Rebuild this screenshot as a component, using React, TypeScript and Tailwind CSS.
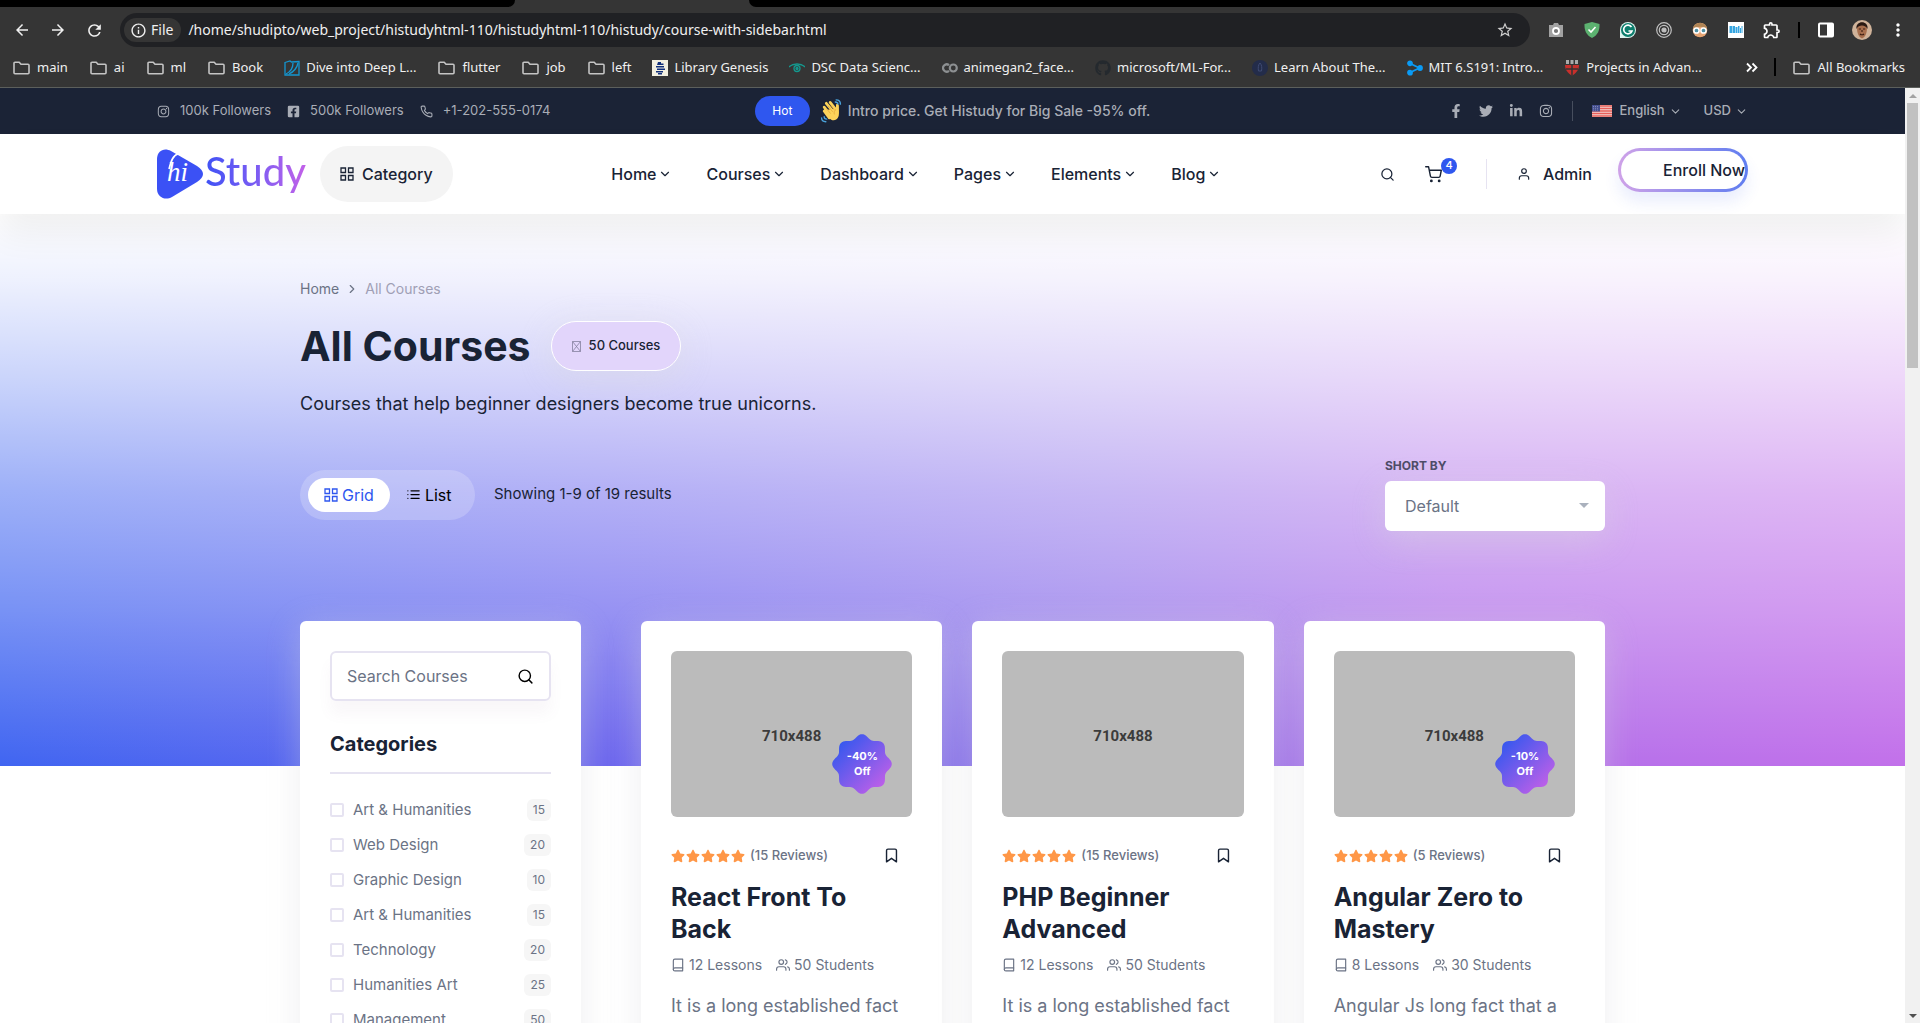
import React from "react";
import { FiBook, FiBookmark, FiChevronDown, FiChevronRight, FiList, FiPhone, FiSearch, FiShoppingCart, FiUser, FiUsers } from "react-icons/fi";
import { FaFacebookF, FaFacebookSquare, FaGithub, FaInstagram, FaLinkedinIn, FaStar, FaTwitter } from "react-icons/fa";
import { MdArrowBack, MdArrowForward, MdInfoOutline, MdMoreVert, MdOutlineExtension, MdRefresh, MdStarBorder } from "react-icons/md";

/* ---------- Browser chrome ---------- */

function FolderIcon() {
  return (
    <svg viewBox="0 0 17 16" className="mx-px h-4 w-[17px]" fill="none" stroke="#c4c4c4" strokeWidth="1.6" strokeLinejoin="round">
      <path d="M1 3.2a1 1 0 0 1 1-1h4.2l1.8 2h7a1 1 0 0 1 1 1v7.6a1 1 0 0 1-1 1H2a1 1 0 0 1-1-1z" />
    </svg>
  );
}

function DiveIcon() {
  return (
    <svg viewBox="0 0 16 16" className="size-4" fill="none" stroke="#1496d0" strokeWidth="1.3">
      <path d="M1 2.5 6 1l1.500 1L15 1.500v13.500H1z" />
      <path d="M9 3C9 8 6 12 2 14M14 3c-1 5-5 9-9 11" />
    </svg>
  );
}

function LibIcon() {
  return (
    <svg viewBox="0 0 16 16" className="size-4">
      <rect width="16" height="16" fill="#f3f0e0" />
      <path d="M6 2h3v1.500h2.500V5H5zM4 6h8v1.500H4zM5 8.500h8V10H5zM4 11h7v1.500H4zM6 13h4v1.500H6z" fill="#12307a" />
    </svg>
  );
}

function EyeIcon() {
  return (
    <svg viewBox="0 0 16 16" className="size-4" fill="none" stroke="#14998f" strokeWidth="1.3">
      <path d="M0 7C4 3 12 3 16 7" />
      <circle cx="8" cy="8.500" r="3" />
      <circle cx="8" cy="8.500" r="1" fill="#14998f" />
    </svg>
  );
}

function ColabIcon() {
  return (
    <svg viewBox="0 0 16 16" className="size-4" fill="none" stroke="#8d9092" strokeWidth="2.200">
      <path d="M7 5.200a3.600 3.600 0 1 0 0 5.600" />
      <circle cx="11.300" cy="8" r="3.500" />
    </svg>
  );
}

function RocketIcon() {
  return (
    <svg viewBox="0 0 16 16" className="size-4">
      <circle cx="8" cy="8" r="8" fill="#232c4a" />
      <path d="M8 3c2 2 2 5 1.500 8h-3C6 8 6 5 8 3z" fill="none" stroke="#3f4a72" />
    </svg>
  );
}

function NodesIcon() {
  return (
    <svg viewBox="0 0 16 16" className="size-4" fill="#0a9bf5" stroke="#0a9bf5" strokeWidth="1.800">
      <path d="M3 3.500 12.500 8 3 12.500" fill="none" />
      <circle cx="3" cy="3.300" r="2" />
      <circle cx="3" cy="12.700" r="2" />
      <circle cx="13" cy="8" r="2" />
    </svg>
  );
}

function ShieldsIcon() {
  return (
    <svg viewBox="0 0 16 16" className="size-4">
      <path d="M2 0h3v4H2zM6.500 0h3v4h-3zM11 0h3v4h-3z" fill="#aaa" />
      <path d="M1 5h14c0 5-3 8-7 11C4 13 1 10 1 5z" fill="#c9302c" />
      <path d="M8 5v11M2 9h12" stroke="#353535" strokeWidth="1.500" />
    </svg>
  );
}

const bookmarks: { label: string; icon: React.ReactNode }[] = [
  { label: "main", icon: <FolderIcon /> },
  { label: "ai", icon: <FolderIcon /> },
  { label: "ml", icon: <FolderIcon /> },
  { label: "Book", icon: <FolderIcon /> },
  { label: "Dive into Deep L...", icon: <DiveIcon /> },
  { label: "flutter", icon: <FolderIcon /> },
  { label: "job", icon: <FolderIcon /> },
  { label: "left", icon: <FolderIcon /> },
  { label: "Library Genesis", icon: <LibIcon /> },
  { label: "DSC Data Scienc...", icon: <EyeIcon /> },
  { label: "animegan2_face...", icon: <ColabIcon /> },
  { label: "microsoft/ML-For...", icon: <FaGithub className="size-4 text-[#24292e]" /> },
  { label: "Learn About The...", icon: <RocketIcon /> },
  { label: "MIT 6.S191: Intro...", icon: <NodesIcon /> },
  { label: "Projects in Advan...", icon: <ShieldsIcon /> },
];

function ToolButton({ label, children }: { label: string; children: React.ReactNode }) {
  return (
    <button type="button" aria-label={label} className="flex w-9 shrink-0 justify-center">
      {children}
    </button>
  );
}

function BrowserChrome() {
  return (
    <div className="shrink-0 border-b border-[#5c5f5c] bg-[#353535] font-['Noto_Sans',sans-serif] text-[#f0f0f0]">
      <div className="flex h-[7px] justify-between bg-[#353535]">
        <div className="w-[515px] rounded-br-lg bg-black" />
        <div className="w-[1171px] rounded-bl-lg bg-black" />
      </div>
      <div className="flex h-[51px] items-start pt-1.5 pr-1 pl-1">
        <div className="flex h-[34px] flex-1 items-center">
          <ToolButton label="Back"><MdArrowBack className="size-[18px]" /></ToolButton>
          <ToolButton label="Forward"><MdArrowForward className="size-[18px]" /></ToolButton>
          <ToolButton label="Reload"><MdRefresh className="size-[19px]" /></ToolButton>
          <div className="mx-2 flex h-[34px] flex-1 items-center gap-[7px] rounded-full bg-[#202124] pr-4 pl-1">
            <button type="button" className="flex h-6 items-center gap-1 rounded-full bg-[#353535] pr-2 pl-1.5 text-sm">
              <MdInfoOutline className="size-[17px]" />
              File
            </button>
            <input
              aria-label="Address"
              readOnly
              value="/home/shudipto/web_project/histudyhtml-110/histudyhtml-110/histudy/course-with-sidebar.html"
              className="min-w-0 flex-1 bg-transparent text-sm outline-none"
            />
            <MdStarBorder className="size-[18px] text-[#d0d0d0]" />
          </div>
          <ToolButton label="Camera">
            <svg viewBox="0 0 16 16" className="size-4">
              <path d="M5 3l1-2h4l1 2h4v12H1V3z" fill="#a2a2a2" />
              <circle cx="8" cy="9" r="3" fill="#777" stroke="#fff" strokeWidth="1.800" />
            </svg>
          </ToolButton>
          <ToolButton label="Ad blocker">
            <svg viewBox="0 0 16 16" className="size-4">
              <path d="M8 0l7.500 2c.3 6-1.500 11-7.500 14C2 13 .2 8 .5 2z" fill="#5cb270" />
              <path d="M4.500 7.500 7 10l4.500-5" fill="none" stroke="#fff" strokeWidth="1.600" />
            </svg>
          </ToolButton>
          <ToolButton label="Grammar">
            <svg viewBox="0 0 16 16" className="size-4">
              <path d="M0 16V8a8 8 0 1 1 8 8z" fill="#dff3ee" />
              <circle cx="8" cy="8" r="7" fill="#0d7d6c" />
              <path d="M11.500 5A4.300 4.300 0 1 0 12 9H8.500" fill="none" stroke="#fff" strokeWidth="1.700" />
            </svg>
          </ToolButton>
          <ToolButton label="Recorder">
            <svg viewBox="0 0 16 16" className="size-4" fill="none" stroke="#c0c0c0" strokeWidth="1.200">
              <circle cx="8" cy="8" r="7.300" />
              <circle cx="8" cy="8" r="4.700" />
              <circle cx="8" cy="8" r="2" fill="#c0c0c0" />
            </svg>
          </ToolButton>
          <ToolButton label="Reader">
            <svg viewBox="0 0 16 16" className="size-4">
              <circle cx="8" cy="8" r="7.300" fill="#e6a574" />
              <path d="M1 7c0-8 14-8 14 0-3-3-11-3-14 0z" fill="#b08556" />
              <circle cx="4.500" cy="8.500" r="2.600" fill="#4f91a5" stroke="#fff" strokeWidth="1.500" />
              <circle cx="11.500" cy="8.500" r="2.600" fill="#4f91a5" stroke="#fff" strokeWidth="1.500" />
            </svg>
          </ToolButton>
          <ToolButton label="Library">
            <svg viewBox="0 0 16 16" className="size-4">
              <rect width="16" height="16" fill="#fff" />
              <path d="M1.500 4h3v7h-3zM5 4h2v7H5zM7.500 5h2v6h-2zM10 4h1.500v7H10zM12 6h1v5h-1zM13.500 4h1v7h-1z" fill="#35a5e0" />
            </svg>
          </ToolButton>
          <ToolButton label="Extensions"><MdOutlineExtension className="size-5 text-white" /></ToolButton>
          <div className="flex w-[18px] shrink-0 justify-center"><div className="h-4 w-0.5 bg-black" /></div>
          <ToolButton label="Side panel">
            <svg viewBox="0 0 16 16" className="size-4">
              <rect x="1" y="1.500" width="14" height="13" rx="1" fill="none" stroke="#fff" strokeWidth="2" />
              <path d="M9 2h6v12H9z" fill="#fff" />
            </svg>
          </ToolButton>
          <ToolButton label="Profile">
            <svg viewBox="0 0 20 20" className="size-5">
              <circle cx="10" cy="10" r="10" fill="#d0b39a" />
              <path d="M5 8c0-7 10-7 10 0 0 5-1.500 9-5 10.500C6.500 17 5 13 5 8z" fill="#a86f4e" />
              <path d="M4.500 9C3 0 17 0 15.500 9 14 5 7 4 4.500 9z" fill="#2a1a14" />
              <path d="M6.800 9h2.200M11 9h2.200M8 14c1 1 3 1 4 0M10 10v2" stroke="#3a1d12" strokeWidth="1.100" fill="none" />
            </svg>
          </ToolButton>
          <ToolButton label="Menu"><MdMoreVert className="size-5 text-white" /></ToolButton>
        </div>
      </div>
      <div className="flex h-[29px] items-start pr-[15px] pl-3 text-[13px] leading-[19px]">
        <nav className="flex flex-1 gap-[21px]">
          {bookmarks.map((b) => (
            <a key={b.label} href="#" className="flex items-center gap-1.5 whitespace-nowrap">
              {b.icon}
              {b.label}
            </a>
          ))}
        </nav>
        <button type="button" aria-label="More bookmarks">
          <svg viewBox="0 0 12 19" className="h-[19px] w-3" fill="none" stroke="#fff" strokeWidth="1.800">
            <path d="m1 5.500 4 4L1 13.500M6.500 5.500l4 4-4 4" />
          </svg>
        </button>
        <div className="mx-4 h-[18px] w-0.5 bg-black" />
        <a href="#" className="flex items-center gap-1.5 whitespace-nowrap">
          <FolderIcon />
          All Bookmarks
        </a>
      </div>
    </div>
  );
}

/* ---------- Site header ---------- */

function WaveHand() {
  return (
    <svg viewBox="0 0 24 28" className="h-6 w-[22px]">
      <path d="M4 13 9 21c3 5 9 5 11 1 2-3 1-6 1-9l-.500-6c0-2-2.500-2-2.500 0l-.3 4" fill="#fcd35a" />
      <g stroke="#fcd35a" strokeWidth="3.200" strokeLinecap="round" fill="none">
        <path d="M4 14l6 8M4 9.500l8 10M6.500 5l9 11M11 4l7 9M19.500 8v8" />
      </g>
      <path d="M6.500 11l5 6M8.500 8l5.500 7M12 7.500l4 5.500M16 18c-1-2 0-5 2-6" stroke="#e0a436" strokeWidth=".8" fill="none" />
      <g stroke="#4aa3dc" strokeWidth="1.600" strokeLinecap="round" fill="none">
        <path d="M17 3.500c2 0 3 1 3.200 2.500M18 1c3 0 5 2 5 5M1 22c0 3 2 4.500 5 4.500M4 20.500c0 2 1 3 3 3" />
      </g>
    </svg>
  );
}

function Flag() {
  return (
    <svg viewBox="0 0 20 12" className="h-3 w-5">
      <rect width="20" height="12" fill="#f3d5d2" />
      <path d="M0 1h20M0 3.500h20M0 6h20M0 8.500h20M0 11h20" stroke="#e8605a" strokeWidth="1.400" />
      <rect width="8" height="6.500" fill="#454f8f" />
      <path d="M1 1.500h6M1 3.300h6M1 5.100h6" stroke="#aab0d0" strokeWidth=".6" strokeDasharray="1 1" />
    </svg>
  );
}

function TopBar() {
  return (
    <div className="grid h-[46px] grid-cols-[1fr_auto_1fr] items-center bg-[#1b2336] px-[157px] text-[13px] font-medium text-[#a9adb6]">
      <div className="flex items-center gap-4 font-normal">
        <a href="#" className="flex items-center gap-2.5"><FaInstagram className="size-[13px]" />100k Followers</a>
        <a href="#" className="flex items-center gap-2.5"><FaFacebookSquare className="size-[13px]" />500k Followers</a>
        <a href="#" className="flex items-center gap-2.5"><FiPhone className="size-[13px]" />+1-202-555-0174</a>
      </div>
      <div className="flex items-center">
        <span className="flex h-[30px] w-[55px] items-center justify-center rounded-full bg-[#2f57ef] text-xs font-normal text-white">Hot</span>
        <span className="mr-1.5 ml-2.5"><WaveHand /></span>
        <span className="text-sm">Intro price. Get Histudy for Big Sale -95% off.</span>
      </div>
      <div className="flex items-center justify-end">
        <div className="flex gap-4">
          <a href="#" aria-label="Facebook"><FaFacebookF className="size-[14px]" /></a>
          <a href="#" aria-label="Twitter"><FaTwitter className="size-[14px]" /></a>
          <a href="#" aria-label="LinkedIn"><FaLinkedinIn className="size-[14px]" /></a>
          <a href="#" aria-label="Instagram"><FaInstagram className="size-[14px]" /></a>
        </div>
        <div className="mx-[19px] h-5 w-px bg-[#474e5e]" />
        <button type="button" className="flex items-center gap-1"><span className="mr-1"><Flag /></span>English<FiChevronDown className="size-[13px]" /></button>
        <button type="button" className="ml-[22px] flex items-center gap-1">USD<FiChevronDown className="size-[13px]" /></button>
      </div>
    </div>
  );
}

function Logo() {
  return (
    <a href="#" aria-label="hiStudy" className="flex items-center">
      <svg viewBox="0 0 46 50" className="h-[50px] w-[46px]">
        <path d="M0 10C0 2 7-2 14 2l26 15c8 5 8 11 0 16L15 48C8 52 0 48 0 40z" fill="#3b51f5" />
        <path d="M12 20C14 12 16 6 21 5" fill="none" stroke="#fff" strokeWidth="1.600" />
        <text x="10" y="32" fill="#fff" fontFamily="Liberation Serif, serif" fontStyle="italic" fontSize="27">hi</text>
      </svg>
      <span className="bg-linear-to-r from-[#3b51f5] via-[#7a5cf3] to-[#c560e8] bg-clip-text pr-0.5 pb-1.5 pl-0.5 font-['Lato',sans-serif] text-[40px] leading-[46px] font-medium text-transparent">
        Study
      </span>
    </a>
  );
}

function GridIcon({ className }: { className: string }) {
  return (
    <svg viewBox="0 0 14 14" className={className} fill="none" stroke="currentColor" strokeWidth="1.300">
      <path d="M1 1h4.500v4.500H1zM8.500 1H13v4.500H8.500zM1 8.500h4.500V13H1zM8.500 8.500H13V13H8.500z" />
    </svg>
  );
}

function Header() {
  return (
    <header className="relative z-10 flex h-20 items-center justify-between bg-white px-[157px] text-base font-medium text-[#192335] shadow-[0_20px_34px_rgba(0,0,0,0.06)]">
      <div className="flex items-center gap-3">
        <Logo />
        <button type="button" className="flex h-14 items-center gap-2 rounded-full bg-[#f4f4f4] px-5">
          <GridIcon className="size-[14px]" />
          Category
        </button>
      </div>
      <nav className="flex gap-[34px]">
        {["Home", "Courses", "Dashboard", "Pages", "Elements", "Blog"].map((n) => (
          <a key={n} href="#" className="flex items-center gap-0.5">
            {n}
            <FiChevronDown className="size-[14px]" />
          </a>
        ))}
      </nav>
      <div className="flex items-center">
        <button type="button" aria-label="Search"><FiSearch className="size-[15px]" /></button>
        <a href="#" aria-label="Cart" className="relative ml-[30px]">
          <FiShoppingCart className="size-[17px]" />
          <span className="absolute -top-2 left-4 flex size-4 items-center justify-center rounded-full bg-[#2f57ef] text-[11px] text-white">4</span>
        </a>
        <div className="mr-[30px] ml-[44px] h-[30px] w-px bg-[#e6e3f1]" />
        <a href="#" className="flex items-center gap-3"><FiUser className="size-[14px]" />Admin</a>
        <button
          type="button"
          className="mb-2 ml-[26px] h-11 w-[130px] rounded-full border-[3px] border-transparent bg-[linear-gradient(#fff,#fff),linear-gradient(90deg,#cfa2e8,#5f7df0)] bg-origin-border text-right whitespace-nowrap shadow-[0_10px_15px_rgba(47,87,239,0.1)] [background-clip:padding-box,border-box]"
        >
          Enroll Now
        </button>
      </div>
    </header>
  );
}

/* ---------- Hero ---------- */

function Hero() {
  return (
    <section className="bg-[linear-gradient(180deg,#fff_0%,rgba(255,255,255,0.91)_12%,rgba(255,255,255,0.72)_30%,rgba(255,255,255,0.49)_50%,rgba(255,255,255,0.29)_72%,rgba(255,255,255,0)_100%),linear-gradient(90deg,#4065f1_0%,#6c66ee_32%,#9173ea_58%,#b070ea_76%,#c270ea_100%)] px-[300px] pt-[63px] pb-[235px]">
      <nav aria-label="Breadcrumb" className="flex h-6 items-center gap-1.5 text-sm text-[#6b7385]">
        <a href="#">Home</a>
        <FiChevronRight className="size-3.5" />
        <span className="text-[#a09fb5]">All Courses</span>
      </nav>
      <div className="mt-5 flex h-[50px] items-center gap-5">
        <h1 className="text-[41px] leading-[50px] font-bold text-[#192335]">All Courses</h1>
        <span className="flex h-[50px] items-center gap-2 rounded-full border border-white bg-[#e2d5fb] px-5 text-[13px] font-medium text-[#192335] shadow-[0_6px_34px_rgba(215,216,222,0.41)]">
          <svg viewBox="0 0 9 11" className="h-[11px] w-[9px]" fill="none" stroke="#85809f" strokeWidth=".8">
            <path d="M.5.5h8v10h-8zM.5.5l8 10M8.500.5l-8 10" />
          </svg>
          50 Courses
        </span>
      </div>
      <p className="mt-[19px] text-lg leading-7 text-[#192335]">Courses that help beginner designers become true unicorns.</p>
      <div className="mt-10 flex items-center justify-between">
        <div className="flex items-center gap-[19px]">
          <div className="flex h-[50px] w-[175px] items-center rounded-full bg-white/20 px-2 text-base">
            <button type="button" className="flex h-[34px] items-center gap-1 rounded-full bg-white px-4 text-[#2f57ef]">
              <GridIcon className="size-[14px]" />
              Grid
            </button>
            <button type="button" className="flex h-[34px] items-center gap-1 px-4 text-black">
              <FiList className="size-[15px]" />
              List
            </button>
          </div>
          <span className="text-[15px] text-[#192335]">Showing 1-9 of 19 results</span>
        </div>
        <div className="flex w-[220px] flex-col gap-[7px]">
          <label htmlFor="sort" className="text-xs leading-4 font-bold text-[#4b4a66]">SHORT BY</label>
          <div className="relative">
            <select id="sort" className="h-[50px] w-full appearance-none rounded-md bg-white px-5 text-base text-[#6b7385] shadow-[0_10px_34px_rgba(215,216,222,0.41)]">
              <option>Default</option>
            </select>
            <span className="pointer-events-none absolute top-[22px] right-4 border-x-[5px] border-t-[5px] border-x-transparent border-t-[#aab1bd]" />
          </div>
        </div>
      </div>
    </section>
  );
}

/* ---------- Sidebar ---------- */

const categories: [string, number][] = [
  ["Art & Humanities", 15],
  ["Web Design", 20],
  ["Graphic Design", 10],
  ["Art & Humanities", 15],
  ["Technology", 20],
  ["Humanities Art", 25],
  ["Management", 50],
];

function Sidebar() {
  return (
    <aside className="w-[281px] shrink-0 rounded-md bg-white p-[30px] shadow-[0_6px_34px_rgba(215,216,222,0.41)]">
      <form className="flex h-[50px] items-center rounded-md border-2 border-[#e6e3f1] px-[15px] shadow-[0_13px_14px_rgba(129,104,145,0.05)]">
        <input type="text" aria-label="Search Courses" placeholder="Search Courses" className="min-w-0 flex-1 text-base outline-none placeholder:text-[#6b7385]" />
        <button type="button" aria-label="Search" className="text-black"><FiSearch className="size-[17px]" /></button>
      </form>
      <h2 className="mt-[29px] border-b-2 border-[#e6e3f1] pb-3.5 text-xl leading-7 font-bold text-[#192335]">Categories</h2>
      <ul className="mt-[25px] flex flex-col gap-[13px]">
        {categories.map(([name, count], i) => (
          <li key={i} className="flex h-[22px] items-center text-[15px] text-[#6b7385]">
            <input id={`cat-${i}`} type="checkbox" className="size-[14px] appearance-none rounded-xs border-2 border-[#e6e3f1] bg-white" />
            <label htmlFor={`cat-${i}`} className="flex-1 pl-[9px]">{name}</label>
            <span className="flex h-[22px] items-center rounded-md bg-[#f6f6f6] px-1.5 text-xs">{count}</span>
          </li>
        ))}
      </ul>
    </aside>
  );
}

/* ---------- Course cards ---------- */

/* Eight rounded lobes around a 60px circle. */
const sealPoints = Array.from({ length: 144 }, (_, i) => {
  const a = (i / 144) * Math.PI * 2;
  const r = 27.6 + 2.2 * Math.cos(8 * a);
  return `${(30 + r * Math.sin(a)).toFixed(2)},${(30 - r * Math.cos(a)).toFixed(2)}`;
}).join(" ");

interface Course {
  title: string;
  off?: string;
  reviews: number;
  lessons: number;
  students: number;
  text: string;
}

const courses: Course[] = [
  { title: "React Front To Back", off: "-40%", reviews: 15, lessons: 12, students: 50, text: "It is a long established fact" },
  { title: "PHP Beginner Advanced", reviews: 15, lessons: 12, students: 50, text: "It is a long established fact" },
  { title: "Angular Zero to Mastery", off: "-10%", reviews: 5, lessons: 8, students: 30, text: "Angular Js long fact that a" },
];

function CourseCard({ c }: { c: Course }) {
  return (
    <article className="rounded-md bg-white p-[30px] shadow-[0_6px_34px_rgba(215,216,222,0.41)]">
      <div className="relative flex aspect-[710/488] items-center justify-center rounded-md bg-[#bbb]">
        <span className="pt-1 font-['Roboto',sans-serif] text-[15px] font-bold text-[#3c3c3c]">710x488</span>
        {c.off && (
          <div className="absolute right-5 bottom-[23px] flex size-[60px] items-center justify-center">
            <svg viewBox="0 0 60 60" className="absolute size-[60px]">
              <defs>
                <linearGradient id={`seal${c.off}`} x1=".1" y1=".1" x2=".9" y2=".9">
                  <stop offset="0" stopColor="#2f57ef" />
                  <stop offset="1" stopColor="#c460e8" />
                </linearGradient>
              </defs>
              <polygon points={sealPoints} fill={`url(#seal${c.off})`} />
            </svg>
            <span className="relative w-9 text-center text-[11px] leading-[15px] font-bold text-white">{c.off} Off</span>
          </div>
        )}
      </div>
      <div className="mt-[29px] flex h-5 items-center text-[13px] text-[#6b7385]">
        <span className="flex gap-px text-[#ff9747]">
          {[0, 1, 2, 3, 4].map((s) => <FaStar key={s} className="size-[14px]" />)}
        </span>
        <span className="ml-[5px] font-medium">({c.reviews} Reviews)</span>
        <button type="button" aria-label="Bookmark" className="mr-3 ml-auto text-[#192335]"><FiBookmark className="size-[17px]" /></button>
      </div>
      <h3 className="mt-[15px] text-[25px] leading-8 font-bold text-[#192335]">{c.title}</h3>
      <div className="mt-2.5 flex h-5 items-center gap-3.5 text-sm text-[#6b7385]">
        <span className="flex items-center gap-1"><FiBook className="size-[14px]" />{c.lessons} Lessons</span>
        <span className="flex items-center gap-1"><FiUsers className="size-[14px]" />{c.students} Students</span>
      </div>
      <p className="mt-4 text-lg leading-[30px] text-[#6b7385]">{c.text}</p>
    </article>
  );
}

function Scrollbar() {
  return (
    <div aria-hidden="true" className="flex w-[15px] shrink-0 flex-col items-center bg-[#f1f1f1]">
      <div className="flex h-[15px] items-center"><span className="border-x-4 border-b-4 border-x-transparent border-b-[#a3a3a3]" /></div>
      <div className="h-[265px] w-[11px] bg-[#c1c1c1]" />
      <div className="mt-auto flex h-[15px] items-center"><span className="border-x-4 border-t-4 border-x-transparent border-t-[#505050]" /></div>
    </div>
  );
}

export default function App() {
  return (
    <div className="flex h-screen flex-col overflow-hidden bg-white font-['Inter',sans-serif]">
      <BrowserChrome />
      <div className="flex min-h-0 flex-1">
        <div className="min-w-0 flex-1 overflow-hidden">
          <TopBar />
          <Header />
          <Hero />
          <main className="-mt-[145px] flex gap-[60px] px-[300px]">
            <Sidebar />
            <div className="grid flex-1 grid-cols-3 gap-[30px]">
              {courses.map((c) => <CourseCard key={c.title} c={c} />)}
            </div>
          </main>
        </div>
        <Scrollbar />
      </div>
    </div>
  );
}
